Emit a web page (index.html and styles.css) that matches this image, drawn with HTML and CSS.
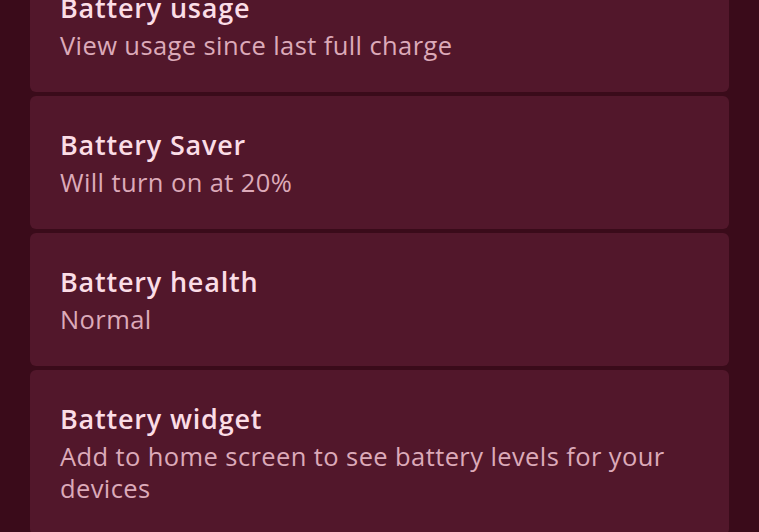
FILE: index.html
```html
<!DOCTYPE html>
<html>
<head>
<meta charset="utf-8">
<link rel="stylesheet" href="styles.css">
</head>
<body>
<div class="list">
  <div class="card">
    <div class="title">Battery usage</div>
    <div class="sub">View usage since last full charge</div>
  </div>
  <div class="card">
    <div class="title">Battery Saver</div>
    <div class="sub">Will turn on at 20%</div>
  </div>
  <div class="card">
    <div class="title">Battery health</div>
    <div class="sub">Normal</div>
  </div>
  <div class="card">
    <div class="title">Battery widget</div>
    <div class="sub">Add to home screen to see battery levels for your devices</div>
  </div>
</div>
</body>
</html>
```
FILE: styles.css
```css
html, body {
  margin: 0;
  padding: 0;
  background: #3a0b1a;
  height: 100%;
  overflow: hidden;
}
body {
  font-family: "Open Sans", "Noto Sans", sans-serif;
}
.list {
  margin: -41px 30px 0 30px;
  display: flex;
  flex-direction: column;
  gap: 4px;
}
.card {
  background: #52172b;
  border-radius: 6px;
  padding: 33px 30px 31px 30px;
}
.title {
  color: #fbdde6;
  font-size: 27px;
  font-weight: 600;
  letter-spacing: 0.8px;
  line-height: 32px;
}
.sub {
  margin-top: 5px;
  color: #dcaab9;
  font-size: 25.5px;
  letter-spacing: 0.4px;
  line-height: 32px;
}
```
